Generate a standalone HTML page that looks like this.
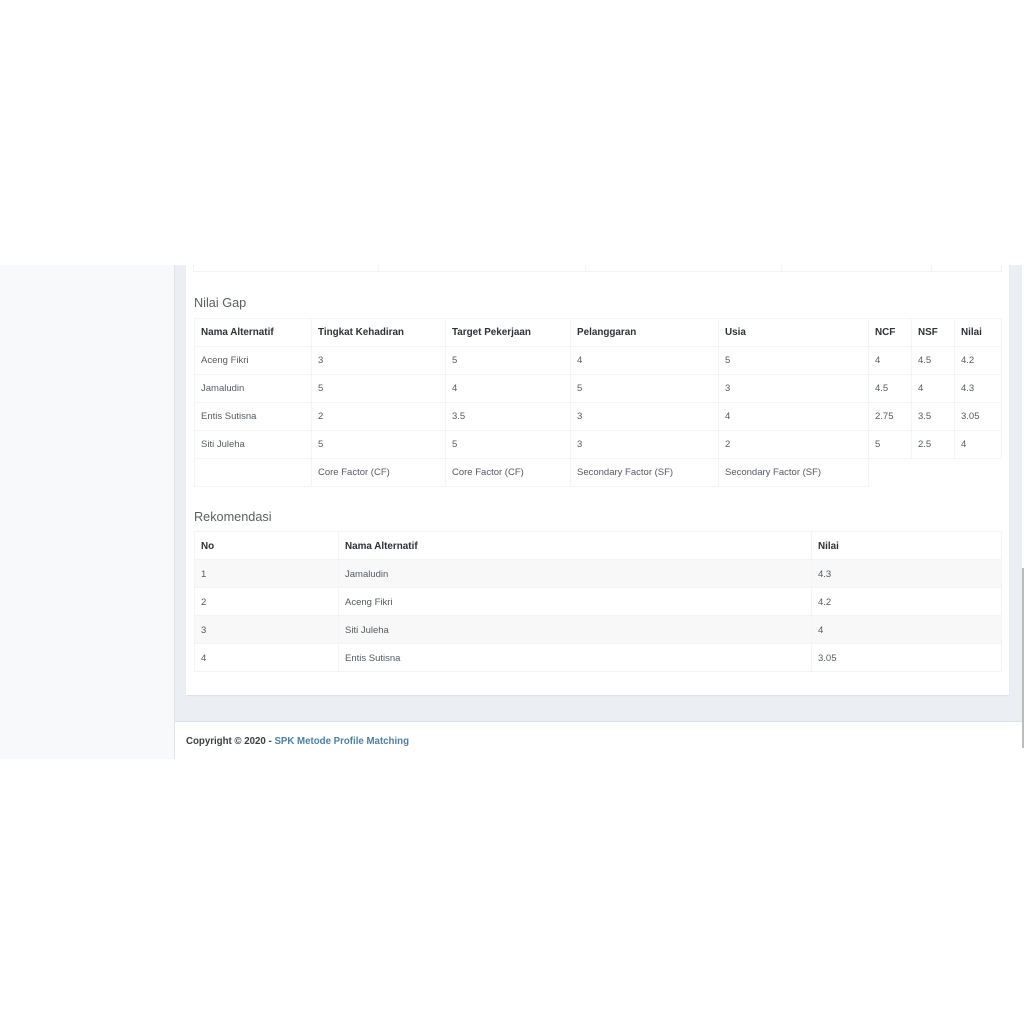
<!DOCTYPE html>
<html>
<head>
<meta charset="utf-8">
<style>
html,body{margin:0;padding:0;background:#fff;}
body{width:1024px;height:1024px;position:relative;overflow:hidden;font-family:"Liberation Sans",sans-serif;font-size:9.5px;color:#555a60;}
.a{position:absolute;}
table{position:absolute;border-collapse:collapse;table-layout:fixed;background:#fff;}
td,th{border:1px solid #f3f4f6;padding:0 0 0 6px;height:27px;text-align:left;font-weight:normal;white-space:nowrap;overflow:hidden;}
th{font-weight:bold;font-size:9.9px;color:#2e3136;}
td.n{border:none;background:#fff;}
.s td{padding-top:2px;height:25px;}
.s th{padding-top:1px;height:26px;}
.s tr:nth-child(even) td{background:#f8f8f9;}
h5{position:absolute;margin:0;font-weight:normal;font-size:12.7px;line-height:16px;color:#5a5f66;}
</style>
</head>
<body>
<div class="a" style="left:0;top:265px;width:174px;height:494px;background:#f8f9fb;"></div>
<div class="a" style="left:174px;top:265px;width:1px;height:494px;background:#e0e2e8;"></div>
<div class="a" style="left:175px;top:265px;width:847px;height:457px;background:#ebeff4;"></div>
<div class="a" style="left:186px;top:265px;width:823px;height:430px;background:#fff;box-shadow:0 1px 1px #dde0e6;"></div>

<div class="a" style="left:193px;top:265px;width:807px;height:6px;border:1px solid #f3f4f6;border-top:none;"></div>
<div class="a" style="left:378px;top:265px;width:1px;height:6px;background:#f3f4f6;"></div>
<div class="a" style="left:585px;top:265px;width:1px;height:6px;background:#f3f4f6;"></div>
<div class="a" style="left:781px;top:265px;width:1px;height:6px;background:#f3f4f6;"></div>
<div class="a" style="left:931px;top:265px;width:1px;height:6px;background:#f3f4f6;"></div>

<h5 style="left:194px;top:295px;">Nilai Gap</h5>
<table style="left:194px;top:318px;width:807px;">
<colgroup><col style="width:117px"><col style="width:134px"><col style="width:125px"><col style="width:148px"><col style="width:150px"><col style="width:43px"><col style="width:43px"><col style="width:47px"></colgroup>
<tr><th>Nama Alternatif</th><th>Tingkat Kehadiran</th><th>Target Pekerjaan</th><th>Pelanggaran</th><th>Usia</th><th>NCF</th><th>NSF</th><th>Nilai</th></tr>
<tr><td>Aceng Fikri</td><td>3</td><td>5</td><td>4</td><td>5</td><td>4</td><td>4.5</td><td>4.2</td></tr>
<tr><td>Jamaludin</td><td>5</td><td>4</td><td>5</td><td>3</td><td>4.5</td><td>4</td><td>4.3</td></tr>
<tr><td>Entis Sutisna</td><td>2</td><td>3.5</td><td>3</td><td>4</td><td>2.75</td><td>3.5</td><td>3.05</td></tr>
<tr><td>Siti Juleha</td><td>5</td><td>5</td><td>3</td><td>2</td><td>5</td><td>2.5</td><td>4</td></tr>
<tr><td></td><td>Core Factor (CF)</td><td>Core Factor (CF)</td><td>Secondary Factor (SF)</td><td>Secondary Factor (SF)</td><td class="n" colspan="3"></td></tr>
</table>

<h5 style="left:194px;top:509px;">Rekomendasi</h5>
<table class="s" style="left:194px;top:531px;width:807px;">
<colgroup><col style="width:144px"><col style="width:473px"><col style="width:190px"></colgroup>
<tr><th>No</th><th>Nama Alternatif</th><th>Nilai</th></tr>
<tr><td>1</td><td>Jamaludin</td><td>4.3</td></tr>
<tr><td>2</td><td>Aceng Fikri</td><td>4.2</td></tr>
<tr><td>3</td><td>Siti Juleha</td><td>4</td></tr>
<tr><td>4</td><td>Entis Sutisna</td><td>3.05</td></tr>
</table>

<div class="a" style="left:175px;top:721px;width:847px;height:1px;background:#dfe2e7;"></div>
<div class="a" style="left:186px;top:736px;font-weight:bold;font-size:9.7px;line-height:12px;color:#3a3d42;white-space:nowrap;">Copyright © 2020 - <span style="color:#4e7fa6;">SPK Metode Profile Matching</span></div>
<div class="a" style="left:1022px;top:568px;width:2px;height:180px;background:#bcbcbc;"></div>
</body>
</html>
